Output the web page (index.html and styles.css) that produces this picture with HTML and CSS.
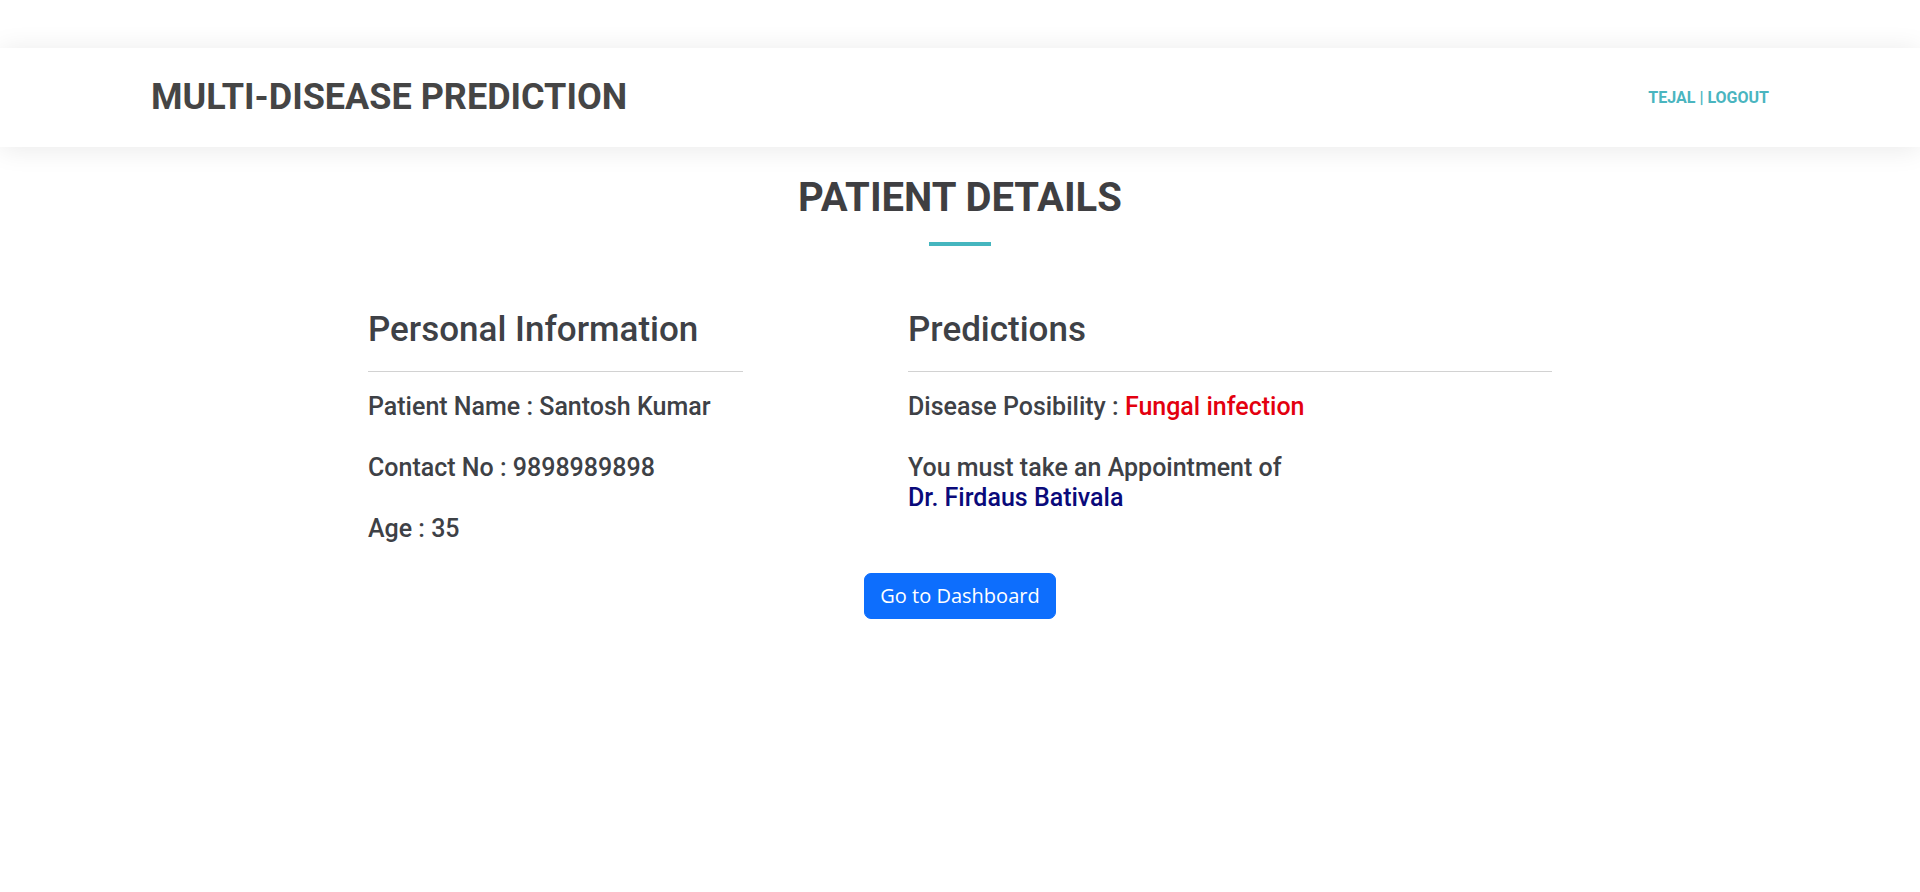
FILE: index.html
```html
<!DOCTYPE html>
<html lang="en">
<head>
<meta charset="utf-8">
<title>Patient Details</title>
<link rel="stylesheet" href="styles.css">
</head>
<body>
<header class="site-header">
  <div class="brand">MULTI-DISEASE PREDICTION</div>
  <nav class="user-nav"><a href="#">TEJAL</a> | <a href="#">LOGOUT</a></nav>
</header>
<main class="page">
  <h1 class="page-title">PATIENT DETAILS</h1>
  <div class="title-bar"></div>
  <section class="details">
    <div class="col col-left">
      <h3 class="col-title">Personal Information</h3>
      <hr class="divider">
      <p class="row">Patient Name : Santosh Kumar</p>
      <p class="row">Contact No : 9898989898</p>
      <p class="row">Age : 35</p>
    </div>
    <div class="col col-right">
      <h3 class="col-title">Predictions</h3>
      <hr class="divider">
      <p class="row">Disease Posibility : <span class="disease">Fungal infection</span></p>
      <p class="row">You must take an Appointment of<br><span class="doctor">Dr. Firdaus Bativala</span></p>
    </div>
  </section>
  <div class="actions">
    <a class="btn-primary" href="#">Go to Dashboard</a>
  </div>
</main>
</body>
</html>
```

FILE: styles.css
```css
html, body {
  margin: 0;
  padding: 0;
  background: #ffffff;
}
body {
  font-family: Roboto, "Liberation Sans", Arial, sans-serif;
  color: #3e4146;
}
.site-header {
  margin-top: 48px;
  height: 99px;
  background: #ffffff;
  box-shadow: 0 2px 26px rgba(0, 0, 0, 0.09);
  display: flex;
  align-items: center;
  justify-content: space-between;
  padding: 0 151px 0 151px;
  box-sizing: border-box;
  position: relative;
}
.brand {
  font-size: 36px;
  font-weight: 700;
  color: #454545;
  line-height: 1.2;
}
.user-nav {
  font-size: 16px;
  font-weight: 700;
  color: #4ab5bf;
}
.user-nav a {
  color: #4ab5bf;
  text-decoration: none;
}
.page {
  display: flex;
  flex-direction: column;
  align-items: center;
}
.page-title {
  margin: 27px 0 0;
  font-size: 40px;
  font-weight: 700;
  line-height: 1.2;
  color: #3f3f42;
}
.title-bar {
  width: 62px;
  height: 4px;
  background: #45b6bf;
  margin-top: 20px;
}
.details {
  display: grid;
  grid-template-columns: 375px 644px;
  column-gap: 165px;
  margin-top: 63px;
}
.col-title {
  margin: 0;
  font-size: 35px;
  font-weight: 500;
  line-height: 1.2;
  color: #3e4146;
}
.divider {
  margin: 20px 0 20px;
  border: 0;
  border-top: 1px solid #d2d2d2;
  height: 0;
}
.row {
  margin: 0 0 31px;
  font-size: 25px;
  font-weight: 500;
  line-height: 30px;
  color: #3e4146;
}
.disease {
  color: #e3000f;
}
.doctor {
  color: #0a0a7a;
}
.actions {
  margin-top: -2px;
}
.btn-primary {
  display: inline-block;
  font-family: "Open Sans", "Noto Sans", sans-serif;
  font-size: 20px;
  line-height: 30px;
  padding: 7px 15.5px;
  border: 1px solid #0d6efd;
  border-radius: 7px;
  background: #0d6efd;
  color: #ffffff;
  text-decoration: none;
}
```
